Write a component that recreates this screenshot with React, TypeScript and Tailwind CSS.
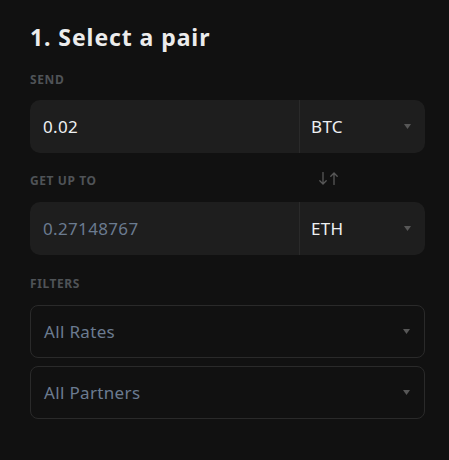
const font = { fontFamily: '"Noto Sans", "Open Sans", sans-serif' };

function Caret() {
  return (
    <svg width="7" height="5" viewBox="0 0 7 5" className="shrink-0">
      <path d="M0 0 L7 0 L3.5 5 Z" fill="#575757" />
    </svg>
  );
}

function SwapArrows() {
  return (
    <svg width="20" height="13" viewBox="0 0 20 13" fill="none" stroke="#585858" strokeWidth="1.3" strokeLinecap="round">
      <path d="M4 0.5 V12 M0.8 8.8 L4 12 L7.2 8.8" />
      <path d="M15 1 V12.5 M11.8 4.2 L15 1 L18.2 4.2" />
    </svg>
  );
}

function Label({ children }: { children: string }) {
  return (
    <div className="text-[12px] font-bold uppercase tracking-[0.05em] text-[#4f5357] leading-none">
      {children}
    </div>
  );
}

function AmountRow({ value, coin, muted }: { value: string; coin: string; muted?: boolean }) {
  return (
    <div className="flex h-[53px] rounded-[10px] bg-[#1e1e1e]">
      <div
        className={`flex flex-1 items-center pl-[13px] text-[17px] tracking-[0.02em] ${
          muted ? "text-[#6b7b90]" : "text-[#eef0f2]"
        }`}
      >
        {value}
      </div>
      <div className="flex w-[126px] items-center justify-between border-l border-[#2a2a2a] pl-[11px] pr-[14px] text-[17px] tracking-[0.02em] text-[#eef0f2]">
        <span>{coin}</span>
        <Caret />
      </div>
    </div>
  );
}

function FilterSelect({ text }: { text: string }) {
  return (
    <div className="flex h-[53px] items-center justify-between rounded-[8px] border border-[#2a2a2a] pl-[13px] pr-[14px] text-[17px] tracking-[0.02em] text-[#6b7b90]">
      <span>{text}</span>
      <Caret />
    </div>
  );
}

export default function App() {
  return (
    <div className="min-h-[460px] w-[449px] bg-[#111111] pl-[30px] pr-[24px] pt-[22px]" style={font}>
      <h1 className="text-[23px] font-bold leading-[30px] tracking-[0.04em] text-[#ececec]">1. Select a pair</h1>

      <div className="mt-[22px]">
        <Label>SEND</Label>
      </div>
      <div className="mt-[14px]">
        <AmountRow value="0.02" coin="BTC" />
      </div>

      <div className="mt-[22px] flex items-center">
        <div className="flex-1">
          <Label>GET UP TO</Label>
        </div>
        <div className="mr-[86px] -mt-[6px] flex">
          <SwapArrows />
        </div>
      </div>
      <div className="mt-[15px]">
        <AmountRow value="0.27148767" coin="ETH" muted />
      </div>

      <div className="mt-[23px]">
        <Label>FILTERS</Label>
      </div>
      <div className="mt-[15px] flex flex-col gap-[8px]">
        <FilterSelect text="All Rates" />
        <FilterSelect text="All Partners" />
      </div>
    </div>
  );
}
